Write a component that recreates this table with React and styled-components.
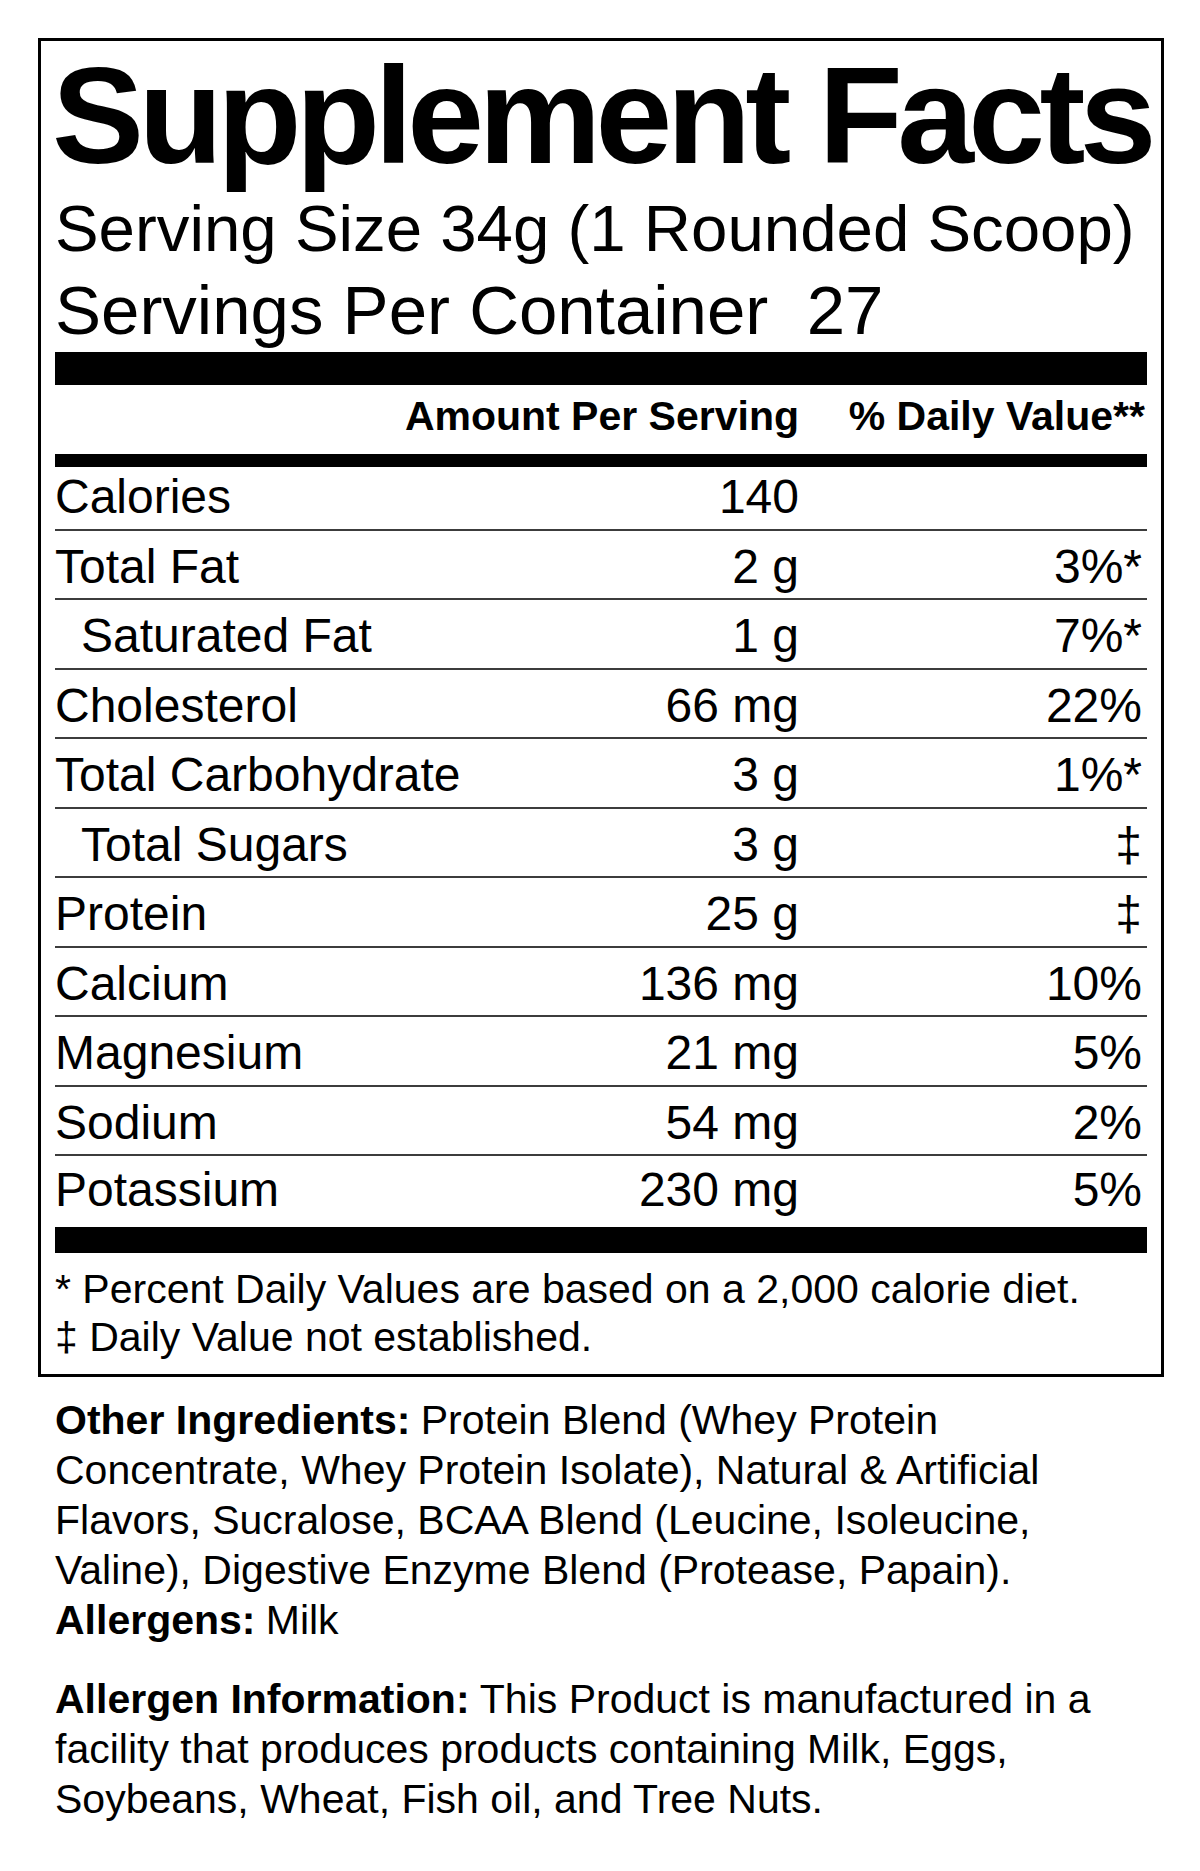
import styled, { createGlobalStyle } from 'styled-components'

const GlobalStyle = createGlobalStyle`
  html, body {
    margin: 0;
    padding: 0;
    background: #fff;
  }
  body {
    font-family: "Liberation Sans", Arial, Helvetica, sans-serif;
    color: #000;
  }
`

const Page = styled.div`
  width: 1200px;
  box-sizing: border-box;
  padding: 38px 36px 40px 38px;
`

const Label = styled.div`
  width: 1126px;
  box-sizing: border-box;
  border: 3px solid #000;
  padding: 5px 14px 0;
`

const Title = styled.h1`
  margin: 0 0 0 -3px;
  font-size: 138px;
  line-height: 138px;
  font-weight: 700;
  letter-spacing: -5.6px;
  white-space: nowrap;
`

const Serving = styled.div`
  margin-top: 4px;
`

const ServingLine = styled.div`
  font-size: ${p => p.$size}px;
  line-height: 82px;
  white-space: pre;
`

const Bar = styled.div`
  height: ${p => p.$h}px;
  background: #000;
`

const Grid = styled.div`
  display: grid;
  grid-template-columns: minmax(0, 1fr) 420px 348px;
  align-items: baseline;
`

const HeaderRow = styled(Grid)`
  font-size: 41px;
  line-height: 50px;
  font-weight: 700;
  padding: 6px 0 13px;
`

const Row = styled(Grid)`
  font-size: 48px;
  line-height: 52px;
  padding-top: ${p => p.$pt}px;
  padding-bottom: ${p => p.$pb}px;
  border-bottom: ${p => (p.$last ? 'none' : '2px solid #3c3c3c')};
`

const Name = styled.span`
  padding-left: ${p => (p.$indent ? 26 : 0)}px;
  white-space: nowrap;
`

const Amount = styled.span`
  text-align: right;
  white-space: nowrap;
`

const Percent = styled.span`
  text-align: right;
  white-space: nowrap;
  padding-right: ${p => p.$pr ?? 5}px;
`

const Footnotes = styled.div`
  font-size: 41px;
  line-height: 48px;
  padding: 12px 0 13px;
`

const Ingredients = styled.div`
  width: 1092px;
  padding: 18px 0 0 17px;
  font-size: 41px;
  line-height: 50px;
`

const Para = styled.p`
  margin: ${p => (p.$gap ? 29 : 0)}px 0 0;
`

const Lead = styled.span`
  font-weight: 700;
  margin-right: 0.25em;
`

const nutrients = [
  { name: 'Calories', amount: '140', dv: '' },
  { name: 'Total Fat', amount: '2 g', dv: '3%*' },
  { name: 'Saturated Fat', amount: '1 g', dv: '7%*', indent: true },
  { name: 'Cholesterol', amount: '66 mg', dv: '22%' },
  { name: 'Total Carbohydrate', amount: '3 g', dv: '1%*' },
  { name: 'Total Sugars', amount: '3 g', dv: '‡', indent: true },
  { name: 'Protein', amount: '25 g', dv: '‡' },
  { name: 'Calcium', amount: '136 mg', dv: '10%' },
  { name: 'Magnesium', amount: '21 mg', dv: '5%' },
  { name: 'Sodium', amount: '54 mg', dv: '2%' },
  { name: 'Potassium', amount: '230 mg', dv: '5%' },
]

export default function App() {
  return (
    <Page>
      <GlobalStyle />
      <Label>
        <Title>Supplement Facts</Title>
        <Serving>
          <ServingLine $size={65.4}>Serving Size 34g (1 Rounded Scoop)</ServingLine>
          <ServingLine $size={69}>Servings Per Container  27</ServingLine>
        </Serving>
        <Bar $h={33} />
        <HeaderRow>
          <span />
          <Amount>Amount Per Serving</Amount>
          <Percent $pr={2}>% Daily Value**</Percent>
        </HeaderRow>
        <Bar $h={13} />
        {nutrients.map((n, i) => {
          const first = i === 0
          const last = i === nutrients.length - 1
          return (
            <Row
              key={n.name}
              $pt={first ? 4 : last ? 8 : 10}
              $pb={last ? 11 : 5.5}
              $last={last}
            >
              <Name $indent={n.indent}>{n.name}</Name>
              <Amount>{n.amount}</Amount>
              <Percent>{n.dv}</Percent>
            </Row>
          )
        })}
        <Bar $h={26} />
        <Footnotes>
          <div>* Percent Daily Values are based on a 2,000 calorie diet.</div>
          <div>‡ Daily Value not established.</div>
        </Footnotes>
      </Label>
      <Ingredients>
        <Para>
          <Lead>Other Ingredients:</Lead>Protein Blend (Whey Protein Concentrate, Whey
          Protein Isolate), Natural &amp; Artificial Flavors, Sucralose, BCAA Blend
          (Leucine, Isoleucine, Valine), Digestive Enzyme Blend (Protease, Papain).
          <br />
          <Lead>Allergens:</Lead>Milk
        </Para>
        <Para $gap>
          <Lead>Allergen Information:</Lead>This Product is manufactured in a facility
          that produces products containing Milk, Eggs, Soybeans, Wheat, Fish oil, and Tree
          Nuts.
        </Para>
      </Ingredients>
    </Page>
  )
}
